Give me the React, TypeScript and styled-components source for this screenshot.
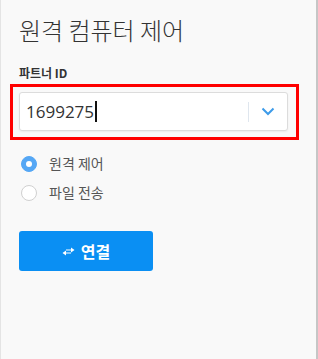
import React from 'react'
import styled, { createGlobalStyle } from 'styled-components'

const GlobalStyle = createGlobalStyle`
  html, body {
    margin: 0;
    padding: 0;
    background: #f9f9f9;
  }
  body {
    font-family: "Open Sans", "Noto Sans CJK KR", sans-serif;
    color: #333;
  }
`

const Panel = styled.div`
  box-sizing: border-box;
  width: 318px;
  height: 359px;
  background: #f9f9f9;
  border-left: 1px solid #e4e4e4;
  border-right: 2px solid #c6c6c6;
  padding: 12px 18px 0 18px;
`

const Title = styled.h1`
  margin: 0;
  font-family: "Noto Sans CJK KR", sans-serif;
  font-weight: 300;
  font-size: 24px;
  line-height: 36px;
  color: #333;
`

const Label = styled.div`
  margin-top: 17px;
  font-family: "Noto Sans CJK KR", sans-serif;
  font-weight: 700;
  font-size: 12px;
  line-height: 16px;
  color: #333;
`

const Highlight = styled.div`
  margin: 3px -1px 0 -9px;
  border: 3px solid #f00;
  padding: 5px 8px 6px 6px;
`

const Combo = styled.div`
  display: flex;
  align-items: center;
  height: 39px;
  box-sizing: border-box;
  background: #fff;
  border: 1px solid #dcdcdc;
  border-radius: 3px;
  box-shadow: 0 1px 2px rgba(0, 0, 0, 0.06);
`

const Value = styled.div`
  flex: 1;
  display: flex;
  align-items: center;
  padding-left: 6px;
  font-family: "Open Sans", sans-serif;
  font-size: 17px;
  color: #333;
`

const Caret = styled.span`
  display: inline-block;
  width: 2px;
  height: 21px;
  background: #111;
  margin-left: 1px;
`

const Divider = styled.div`
  width: 1px;
  height: 20px;
  background: #dfe6ee;
`

const Toggle = styled.div`
  width: 38px;
  display: flex;
  align-items: center;
  justify-content: center;
`

const Options = styled.div`
  margin-top: 13px;
  display: flex;
  flex-direction: column;
  gap: 8px;
`

const Option = styled.label`
  display: flex;
  align-items: center;
  gap: 12px;
  padding-left: 2px;
  font-family: "Noto Sans CJK KR", sans-serif;
  font-size: 14px;
  line-height: 21px;
  color: #555;
`

const Radio = styled.span<{ $checked?: boolean }>`
  box-sizing: border-box;
  width: 16px;
  height: 16px;
  border-radius: 50%;
  background: ${p => (p.$checked ? '#55a7f5' : '#fff')};
  border: 1px solid ${p => (p.$checked ? '#55a7f5' : '#d0d0d0')};
  display: flex;
  align-items: center;
  justify-content: center;

  &::after {
    content: '';
    display: ${p => (p.$checked ? 'block' : 'none')};
    width: 6px;
    height: 6px;
    border-radius: 50%;
    background: #fff;
  }
`

const ConnectButton = styled.button`
  margin-top: 28px;
  width: 134px;
  height: 40px;
  border: none;
  border-radius: 3px;
  background: #0a8ff3;
  color: #fff;
  display: flex;
  align-items: center;
  justify-content: center;
  gap: 6px;
  font-family: "Noto Sans CJK KR", sans-serif;
  font-weight: 700;
  font-size: 16px;
  cursor: pointer;
  padding: 0;
`

const Chevron = () => (
  <svg width="14" height="9" viewBox="0 0 14 9">
    <path d="M1.5 1.5 L7 7 L12.5 1.5" fill="none" stroke="#3d9be9" strokeWidth="2" />
  </svg>
)

const Exchange = () => (
  <svg width="13" height="9" viewBox="0 0 13 9">
    <path d="M9 0.5 L12.5 3 L9 5.5 Z" fill="#fff" />
    <path d="M4 3.5 L9.5 3.5 L9.5 2.5 L4 2.5 Z" fill="#fff" />
    <path d="M4 3.5 L0.5 6 L4 8.5 Z" fill="#fff" />
    <path d="M3.5 6.5 L9 6.5 L9 5.5 L3.5 5.5 Z" fill="#fff" />
  </svg>
)

const App = () => {
  return (
    <Panel>
      <GlobalStyle />
      <Title>원격 컴퓨터 제어</Title>
      <Label>파트너 ID</Label>
      <Highlight>
        <Combo>
          <Value>
            1699275
            <Caret />
          </Value>
          <Divider />
          <Toggle>
            <Chevron />
          </Toggle>
        </Combo>
      </Highlight>
      <Options>
        <Option>
          <Radio $checked />
          원격 제어
        </Option>
        <Option>
          <Radio />
          파일 전송
        </Option>
      </Options>
      <ConnectButton>
        <Exchange />
        연결
      </ConnectButton>
    </Panel>
  )
}

export default App
